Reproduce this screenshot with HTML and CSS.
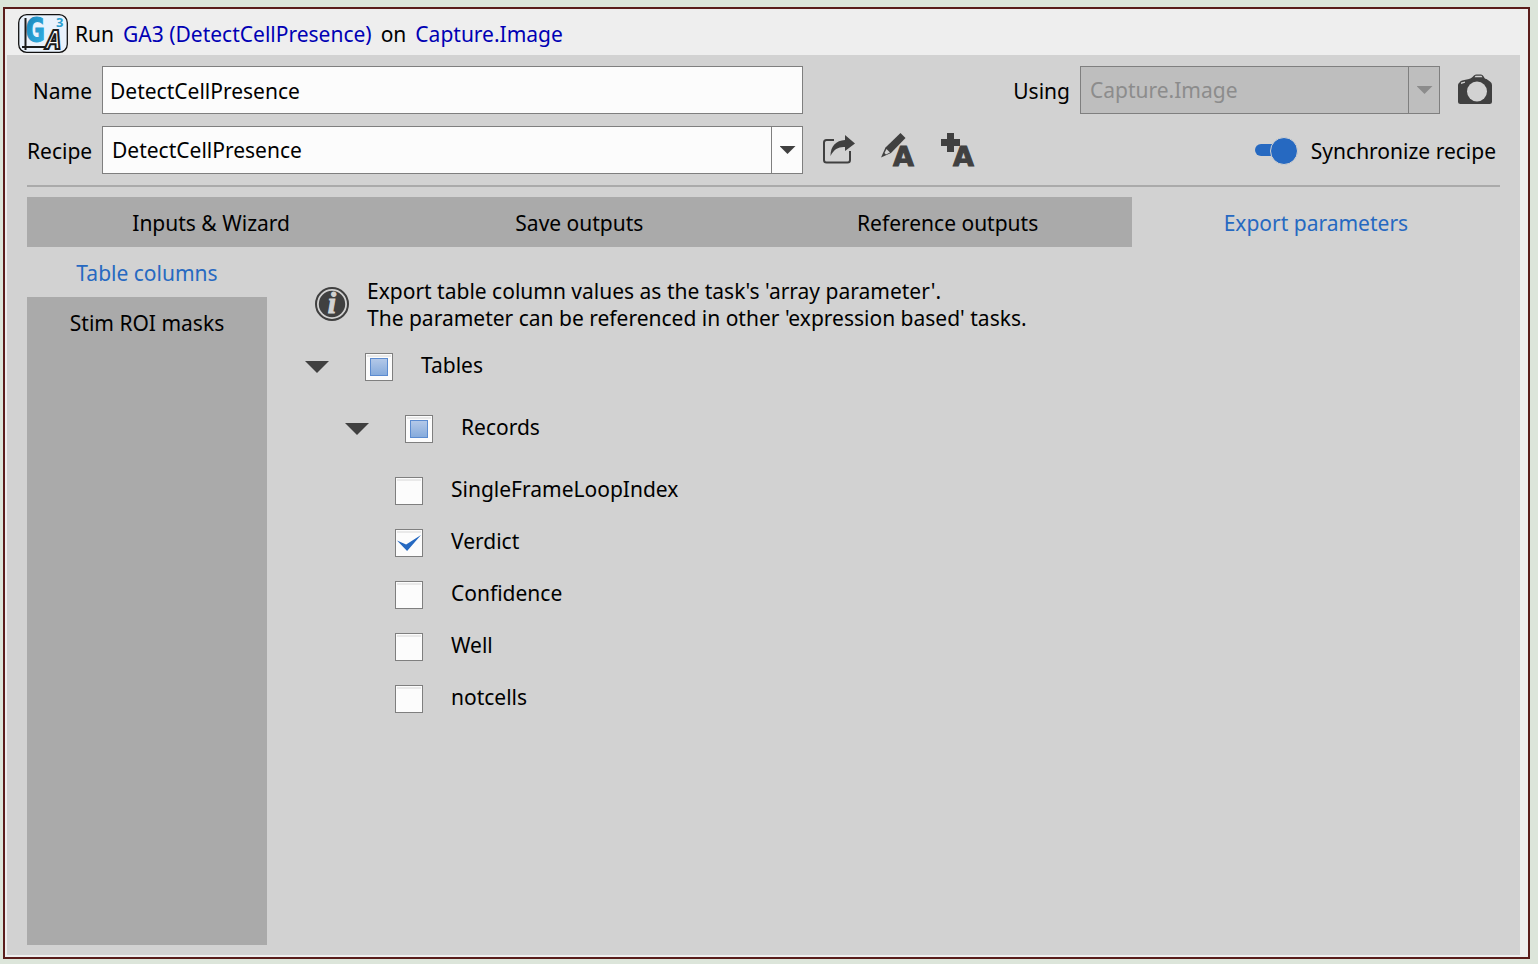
FILE: index.html
```html
<!DOCTYPE html>
<html lang="en">
<head>
<meta charset="utf-8">
<title>Run GA3 (DetectCellPresence)</title>
<link rel="stylesheet" href="styles.css">
</head>
<body>
<main class="frame">
  <header class="title">
    <svg class="logo" width="50" height="39" viewBox="0 0 50 39" aria-hidden="true">
      <defs><linearGradient id="g" x1="0" y1="0" x2="1" y2="1"><stop offset="0" stop-color="#1580b4"/><stop offset="1" stop-color="#35b4e8"/></linearGradient></defs>
      <rect x=".7" y=".7" width="48.600" height="37.600" rx="8" fill="#e9f2fc" stroke="#111" stroke-width="1.300"/>
      <text class="logo-g" x="7" y="28" fill="url(#g)" stroke="url(#g)">G</text>
      <path d="M7.500 4v32M4 33H27" fill="none" stroke="#1c1c1c" stroke-width="2"/>
      <text class="logo-a" x="28" y="35">A</text>
      <text class="logo-3" x="38" y="13">3</text>
    </svg>
    <span>Run</span>
    <a class="link" href="#task">GA3 (DetectCellPresence)</a>
    <span>on</span>
    <a class="link" href="#source">Capture.Image</a>
  </header>

  <section class="panel">
    <div class="row">
      <label class="caption" for="name">Name</label>
      <input class="field" id="name" type="text" value="DetectCellPresence">
      <label class="using push" for="using">Using</label>
      <div class="combo combo-using">
        <select id="using" disabled><option>Capture.Image</option></select>
        <span class="drop"></span>
      </div>
      <button class="icon camera" type="button" aria-label="Capture">
        <svg width="34" height="34" viewBox="0 0 34 34"><path fill="#404040" d="M2 8Q2 7 4 6.500L11 5Q13 4.500 14.500 3L16 1.500Q17 .500 18.500 .500H23Q24.500 .500 25.300 2L26.500 4Q27 5 28.500 5L32 7.500Q34 8.500 34 11V27.500Q34 30 31.500 30H2.500Q0 30 0 27.500V11Q0 9.500 2 8Z"/><path fill="#d2d2d2" d="M17.500 1.800H23.500L24.500 3.300H16.500ZM3 8.500L7 7.500V8.800L3 10Z"/><circle cx="19" cy="17.500" r="10" fill="#d2d2d2"/></svg>
      </button>
    </div>
    <div class="row">
      <label class="caption" for="recipe">Recipe</label>
      <div class="combo">
        <select id="recipe"><option>DetectCellPresence</option></select>
        <span class="drop"></span>
      </div>
      <div class="tools">
        <button class="icon" type="button" aria-label="Export recipe">
          <svg width="34" height="34" viewBox="0 0 34 34"><path d="M13 7H5.500Q3 7 3 9.500V27Q3 29.500 5.500 29.500H26.500Q29 29.500 29 27V18" fill="none" stroke="#404040" stroke-width="2"/><path fill="#404040" d="M24 2L34 10.500L24 18V14C18 13.500 13 16 9.500 23C9.500 13 15 7.500 24 7Z"/></svg>
        </button>
        <button class="icon" type="button" aria-label="Rename recipe">
          <svg width="34" height="34" viewBox="0 0 34 34"><path fill="#404040" d="M19.500 0L24.500 5L10 20L0 24.500L4.500 14.500Z"/><path fill="#d2d2d2" d="M5.500 16L9 19.500L5 21.500L3.500 20Z"/><text class="glyph" x="12" y="33">A</text></svg>
        </button>
        <button class="icon" type="button" aria-label="Add recipe">
          <svg width="34" height="34" viewBox="0 0 34 34"><path fill="#404040" d="M6 0H13V6H19V13H13V19H6V13H0V6H6Z"/><text class="glyph" x="12" y="33">A</text></svg>
        </button>
      </div>
      <label class="sync push"><input class="switch" type="checkbox" role="switch" checked><span>Synchronize recipe</span></label>
    </div>
    <hr class="rule">
    <nav class="tabs">
      <button type="button">Inputs &amp; Wizard</button>
      <button type="button">Save outputs</button>
      <button type="button">Reference outputs</button>
      <button class="active" type="button">Export parameters</button>
    </nav>
    <div class="body">
      <nav class="side">
        <button class="active" type="button">Table columns</button>
        <button type="button">Stim ROI masks</button>
      </nav>
      <div class="content">
        <div class="info">
          <svg width="34" height="34" viewBox="0 0 34 34" aria-hidden="true"><circle cx="17" cy="17" r="16" fill="none" stroke="#404040" stroke-width="2"/><circle cx="17" cy="17" r="13.200" fill="#404040"/><text class="info-i" x="17" y="26">i</text></svg>
          <p>Export table column values as the task's 'array parameter'.<br>The parameter can be referenced in other 'expression based' tasks.</p>
        </div>
        <div class="tree">
          <div class="node"><button class="twist" type="button" aria-label="Collapse Tables"></button><input class="check partial" id="c1" type="checkbox" aria-checked="mixed"><label for="c1">Tables</label></div>
          <div class="node level2"><button class="twist" type="button" aria-label="Collapse Records"></button><input class="check partial" id="c2" type="checkbox" aria-checked="mixed"><label for="c2">Records</label></div>
          <div class="leaves">
            <div class="leaf"><input class="check" id="c3" type="checkbox"><label for="c3">SingleFrameLoopIndex</label></div>
            <div class="leaf"><input class="check" id="c4" type="checkbox" checked><label for="c4">Verdict</label></div>
            <div class="leaf"><input class="check" id="c5" type="checkbox"><label for="c5">Confidence</label></div>
            <div class="leaf"><input class="check" id="c6" type="checkbox"><label for="c6">Well</label></div>
            <div class="leaf"><input class="check" id="c7" type="checkbox"><label for="c7">notcells</label></div>
          </div>
        </div>
      </div>
    </div>
  </section>
</main>
</body>
</html>
```
FILE: styles.css
```css
* { box-sizing: border-box; }
body {
  margin: 0;
  min-height: 100vh;
  padding: 7px 8px 5px 3px;
  display: flex;
  background: #dce5da;
  color: #000;
  font: 21px/27px "Noto Sans", Tahoma, sans-serif;
}
button, input, select { font: inherit; color: inherit; }
button { border: 0; padding: 0; background: none; }
.frame {
  flex: 1;
  display: flex;
  flex-direction: column;
  border: 2px solid #5a1d1b;
  padding: 0 8px 2px 2px;
  background: #eee;
}
.title { display: flex; align-items: center; gap: 9px; height: 46px; padding: 3px 0 0 11px; }
.title span, .title a { padding-top: 2px; }
.logo { margin-right: -2px; }
.logo-g { font: bold 33px "DejaVu Sans Mono", monospace; }
.logo-a { font: italic bold 26px "DejaVu Sans Mono", monospace; fill: #fff; stroke: #1c1c1c; stroke-width: 2; }
.logo-3 { font: bold 13px "Noto Sans", sans-serif; fill: #2a9fd0; }
.link { color: #0000b4; text-decoration: none; }
.panel {
  flex: 1;
  display: flex;
  flex-direction: column;
  padding: 11px 20px 10px;
  background: #d2d2d2;
}
.row { display: flex; align-items: center; height: 48px; margin-bottom: 12px; }
.caption { flex: none; width: 65px; text-align: right; margin-right: 10px; }
.caption, .using, .sync span { padding-top: 2px; }
.push { margin-left: auto; }
.field, .combo { flex: 0 1 701px; min-width: 0; height: 48px; }
.field { border: 1px solid #7f7f7f; background: #fcfcfc; padding: 2px 7px 0; }
.combo { position: relative; }
.combo-using { flex-basis: 360px; margin-left: 10px; }
.combo select {
  appearance: none;
  width: 100%;
  height: 100%;
  border: 1px solid #7f7f7f;
  border-radius: 0;
  background: #fcfcfc;
  padding: 0 40px 0 9px;
}
.combo select:disabled { background: #bebebe; color: #8c8c8c; opacity: 1; }
.drop {
  position: absolute;
  top: 0;
  right: 0;
  width: 32px;
  height: 100%;
  border-left: 1px solid #7f7f7f;
  display: grid;
  place-items: center;
  pointer-events: none;
}
.drop::after { content: ""; width: 16px; height: 8px; background: #404040; clip-path: polygon(0 0, 100% 0, 50% 100%); }
.combo-using .drop::after { background: #8c8c8c; }
.icon { flex: none; width: 34px; height: 34px; }
.icon svg { display: block; overflow: visible; }
.camera { margin: 2px 8px 0 18px; }
.tools { display: flex; gap: 26px; margin-left: 18px; }
.glyph { font: bold 27px "DejaVu Sans", sans-serif; fill: #404040; stroke: #404040; stroke-width: 1; }
.sync { display: flex; align-items: center; gap: 14px; margin-right: 4px; }
.switch { appearance: none; position: relative; width: 42px; height: 24px; margin: 0; }
.switch::before { content: ""; position: absolute; left: 0; top: 6px; width: 24px; height: 12px; border-radius: 6px; background: #2669c1; }
.switch::after { content: ""; position: absolute; right: -1px; top: -1px; width: 26px; height: 26px; border: 1px solid #d2d2d2; border-radius: 50%; background: #2669c1; }
.rule { width: 100%; height: 2px; margin: -1px 0 10px; border: 0; background: #aaa; }
.tabs { display: grid; grid-template-columns: repeat(4, 1fr); height: 50px; }
.tabs button, .side button { padding-top: 2px; }
.tabs button, .side { background: #aaa; }
.side { width: 240px; flex: none; display: flex; flex-direction: column; }
.side button { height: 50px; }
.tabs .active, .side .active { background: #d2d2d2; color: #2669c1; }
.body { flex: 1; display: flex; }
.content { flex: 1; padding: 31px 0 0 38px; }
.info { display: flex; gap: 18px; padding-left: 10px; }
.info svg { flex: none; margin-top: 9px; }
.info p { margin: 0; }
.info-i { font: italic bold 30px "Liberation Serif", serif; fill: #d2d2d2; stroke: #d2d2d2; stroke-width: 1; text-anchor: middle; }
.tree { padding-top: 4px; }
.node { display: flex; align-items: center; height: 62px; }
.level2 { padding-left: 40px; }
.leaves { padding: 5px 0 0 90px; }
.leaf { display: flex; align-items: center; height: 52px; }
.twist { width: 24px; height: 12px; margin-right: 36px; background: #404040; clip-path: polygon(0 0, 100% 0, 50% 100%); }
.check {
  appearance: none;
  flex: none;
  width: 28px;
  height: 28px;
  margin: 0 28px 0 0;
  padding: 1px;
  display: grid;
  place-items: center;
  border: 1px solid #7f7f7f;
  background: linear-gradient(#e9e9e9, #e9e9e9) 50% 1px / 24px 2px no-repeat #fcfcfc;
}
.partial::before { content: ""; width: 16px; height: 16px; border: 1px solid #5b8bd0; background: linear-gradient(#b3c8e8, #86abdc); }
.check:checked::before {
  content: "";
  width: 24px;
  height: 16px;
  background: #2669c1;
  clip-path: polygon(0 34%, 38% 60%, 100% 0, 42% 100%);
}
.node label, .leaf label { padding-bottom: 4px; }
```
